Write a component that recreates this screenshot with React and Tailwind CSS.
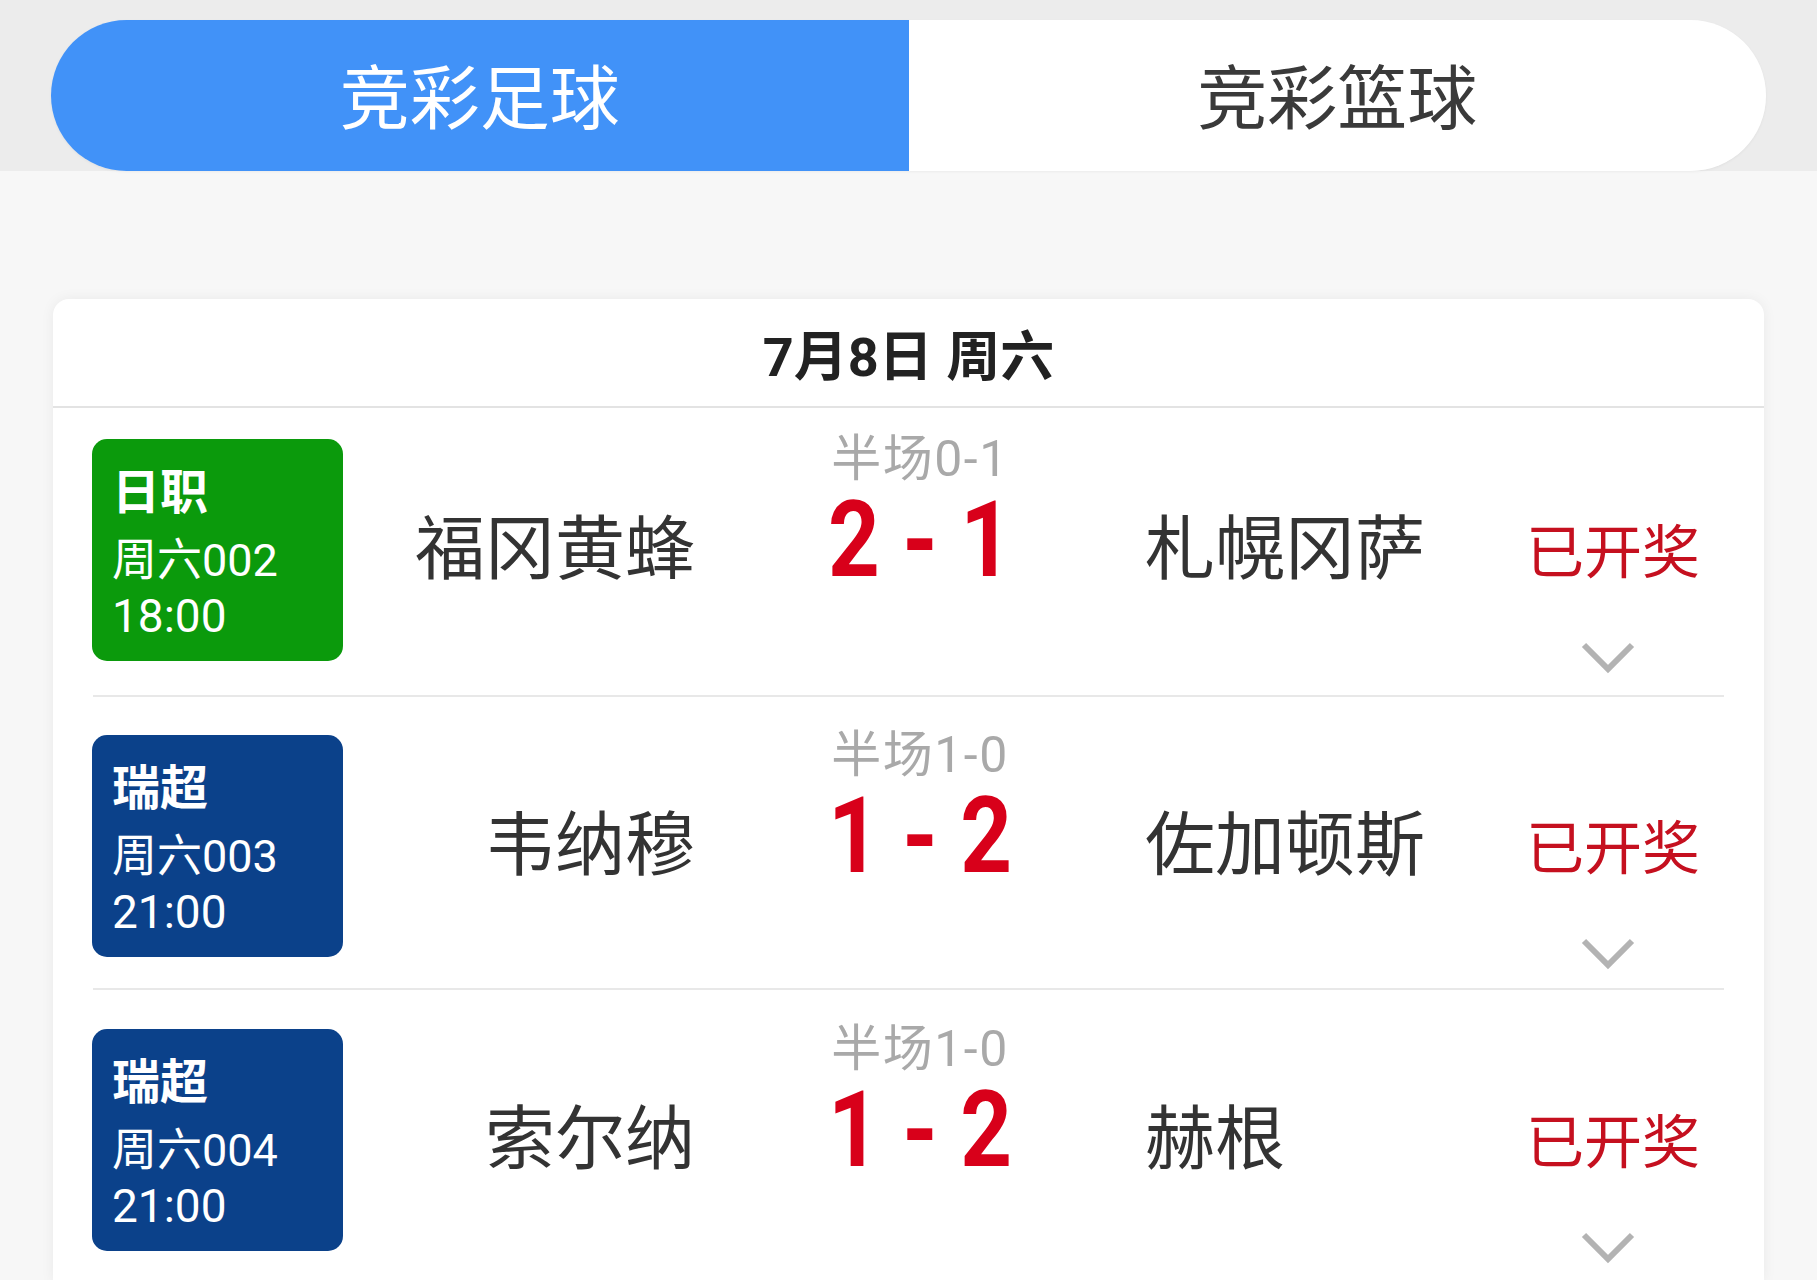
import React from 'react';

const matches = [
  { league: '日职', code: '周六002', time: '18:00', color: 'bg-[#0b9a0c]', home: '福冈黄蜂', away: '札幌冈萨', half: '半场0-1', score: ['2', '1'], box: 'pt-[27px] h-[287px]' },
  { league: '瑞超', code: '周六003', time: '21:00', color: 'bg-[#0b418a]', home: '韦纳穆', away: '佐加顿斯', half: '半场1-0', score: ['1', '2'], box: 'pt-[34px] h-[291px]' },
  { league: '瑞超', code: '周六004', time: '21:00', color: 'bg-[#0b418a]', home: '索尔纳', away: '赫根', half: '半场1-0', score: ['1', '2'], box: 'pt-[35px] h-[292px]' },
];

function Chevron() {
  return (
    <svg width="56" height="34" viewBox="0 0 56 34" fill="none">
      <polyline points="4,5 28,29 52,5" stroke="#b3b3b3" strokeWidth="6" />
    </svg>
  );
}

function MatchRow({ m, last }) {
  return (
    <div>
      <div className={`flex items-start pl-[39px] box-border overflow-hidden ${m.box}`}>
        <div className={`w-[251px] h-[222px] mt-[4px] shrink-0 rounded-[15px] ${m.color} text-white pl-[20px] pt-[30px]`}>
          <div className="text-[48px] leading-none font-bold">{m.league}</div>
          <div className="text-[45px] leading-none mt-[21px]">{m.code}</div>
          <div className="text-[46px] leading-none mt-[10px]">{m.time}</div>
        </div>
        <div className="w-[352px] shrink-0 text-right text-[70px] leading-none text-[#333] mt-[80px]">{m.home}</div>
        <div className="w-[450px] shrink-0 flex flex-col items-center">
          <div className="text-[50px] leading-none tracking-[1.5px] text-[#a9a9a9] mt-[-1px]">{m.half}</div>
          <div className="mt-[4px] text-[105px] leading-none font-bold text-[#d8001a] scale-x-[0.86] whitespace-pre">
            {m.score[0]} - {m.score[1]}
          </div>
        </div>
        <div className="w-[381px] shrink-0 text-left text-[70px] leading-none text-[#333] mt-[80px]">{m.away}</div>
        <div className="flex flex-col">
          <div className="text-[58px] leading-none text-[#c5101f] mt-[89px]">已开奖</div>
          <div className="ml-[54px] mt-[58px]">
            <Chevron />
          </div>
        </div>
      </div>
      {!last && <div className="mx-[40px] h-[2px] bg-[#e8e8e8]" />}
    </div>
  );
}

export default function App() {
  return (
    <div className="bg-[#f7f7f7] font-['Roboto','Noto_Sans_CJK_SC',sans-serif] overflow-hidden h-[1280px]">
      <div className="bg-[#ececec] h-[171px] pt-[20px] px-[51px]">
        <div className="flex h-[151px] shadow-[0_1px_3px_rgba(0,0,0,0.05)] rounded-full">
          <div className="flex-1 bg-[#4192f8] rounded-l-full flex items-center justify-center pt-[10px] text-white text-[70px]">
            竞彩足球
          </div>
          <div className="flex-1 bg-white rounded-r-full flex items-center justify-center pt-[10px] text-[#3a3a3a] text-[70px]">
            竞彩篮球
          </div>
        </div>
      </div>

      <div className="mx-[53px] mt-[128px] bg-white rounded-t-[16px] shadow-[0_0_14px_rgba(0,0,0,0.06)]">
        <div className="h-[109px] flex items-center justify-center pt-[10px] text-[54px] font-bold text-[#222] border-b-2 border-[#e3e3e3]">
          7月8日 周六
        </div>
        {matches.map((m, i) => (
          <MatchRow key={i} m={m} last={i === matches.length - 1} />
        ))}
      </div>
    </div>
  );
}
